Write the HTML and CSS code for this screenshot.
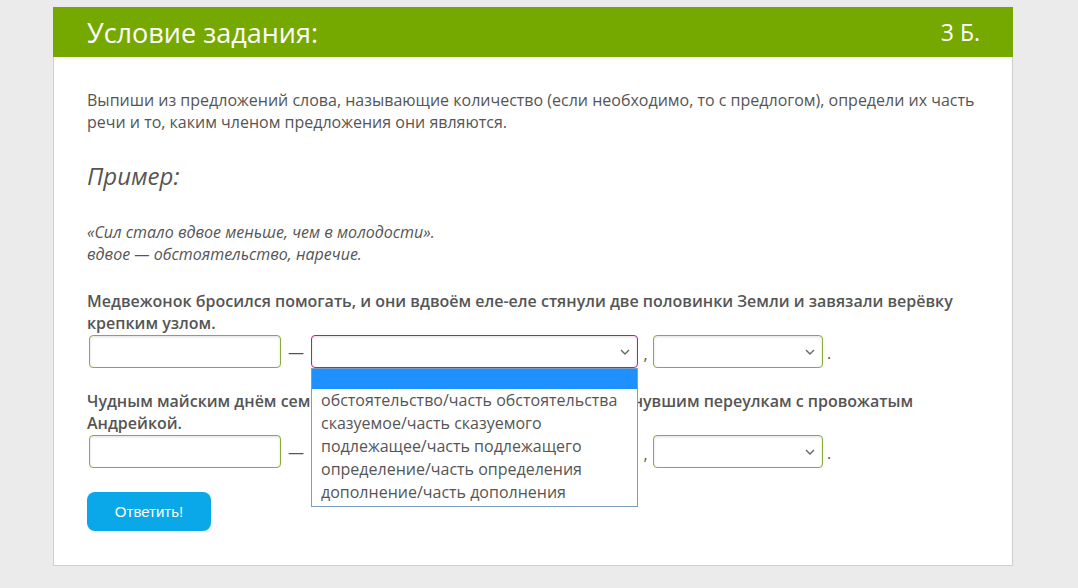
FILE: index.html
```html
<!doctype html>
<html lang="ru">
  <head>
    <meta charset="utf-8">
    <title>Условие задания</title>
    <link rel="stylesheet" href="styles.css">
  </head>
  <body>
    <div class="card">
      <div class="card-head">
        <span class="title">Условие задания:</span>
        <span class="points">3 Б.</span>
      </div>

      <div class="card-body">
        <p class="task">Выпиши из предложений слова, называющие количество (если необходимо, то с предлогом), определи их часть речи и то, каким членом предложения они являются.</p>

        <h2 class="example-title">Пример:</h2>
        <p class="example">«Сил стало вдвое меньше, чем в молодости».<br>вдвое — обстоятельство, наречие.</p>

        <p class="sentence">Медвежонок бросился помогать, и они вдвоём еле-еле стянули две половинки Земли и завязали верёвку крепким узлом.</p>
        <div class="answer-row">
          <div class="field"></div>
          <span class="sep dash">—</span>
          <div class="select wide focused">
            <svg class="chev" width="10" height="6" viewBox="0 0 10 6"><path d="M1 1l4 4 4-4" fill="none" stroke="#666" stroke-width="1.4"/></svg>
            <div class="dropdown">
              <div class="opt selected"></div>
              <div class="opt">обстоятельство/часть обстоятельства</div>
              <div class="opt">сказуемое/часть сказуемого</div>
              <div class="opt">подлежащее/часть подлежащего</div>
              <div class="opt">определение/часть определения</div>
              <div class="opt">дополнение/часть дополнения</div>
            </div>
          </div>
          <span class="sep comma">,</span>
          <div class="select narrow">
            <svg class="chev" width="10" height="6" viewBox="0 0 10 6"><path d="M1 1l4 4 4-4" fill="none" stroke="#666" stroke-width="1.4"/></svg>
          </div>
          <span class="sep dot">.</span>
        </div>

        <p class="sentence second">Чудным майским днём семеро ребят весело гуляли по тихим, затонувшим переулкам с провожатым Андрейкой.</p>
        <div class="answer-row">
          <div class="field"></div>
          <span class="sep dash">—</span>
          <div class="select wide">
            <svg class="chev" width="10" height="6" viewBox="0 0 10 6"><path d="M1 1l4 4 4-4" fill="none" stroke="#666" stroke-width="1.4"/></svg>
          </div>
          <span class="sep comma">,</span>
          <div class="select narrow">
            <svg class="chev" width="10" height="6" viewBox="0 0 10 6"><path d="M1 1l4 4 4-4" fill="none" stroke="#666" stroke-width="1.4"/></svg>
          </div>
          <span class="sep dot">.</span>
        </div>

        <button class="answer-btn" type="button">Ответить!</button>
      </div>
    </div>
  </body>
</html>
```

FILE: styles.css
```css
body {
  margin: 0;
  background: #ebebeb;
  font-family: "Open Sans", "Noto Sans", sans-serif;
  color: #555;
}

.card {
  box-sizing: border-box;
  width: 960px;
  height: 559px;
  margin: 7px 0 0 53px;
  background: #fff;
  border: 1px solid #cfcfcf;
  border-top: 0;
}

.card-head {
  display: flex;
  justify-content: space-between;
  align-items: center;
  height: 50px;
  margin: 0 -1px;
  padding: 0 33px 0 34px;
  background: #76a900;
  color: #fff;
}
.card-head .title { font-size: 27px; }
.card-head .points { font-size: 23px; }

.card-body {
  padding: 32px 34px 0 33px;
}

.task {
  margin: 0;
  font-size: 16px;
  line-height: 22px;
}

.example-title {
  margin: 27px 0 0;
  font-size: 24px;
  line-height: 32px;
  font-weight: normal;
  font-style: italic;
}

.example {
  margin: 29px 0 0;
  font-size: 16px;
  line-height: 22px;
  font-style: italic;
}

.sentence {
  margin: 25px 0 0;
  font-size: 16px;
  line-height: 22px;
  font-weight: 600;
}
.sentence.second { margin-top: 22px; }

.answer-row {
  display: flex;
  align-items: center;
  margin: 1px 0 0 2px;
  height: 33px;
}

.field, .select {
  box-sizing: border-box;
  height: 33px;
  border: 1px solid #8bab37;
  border-radius: 4px;
  box-shadow: inset 0 1px 3px rgba(0, 0, 0, .12);
  background: #fff;
}
.field { width: 192px; }

.select { position: relative; }
.select.wide { width: 327px; }
.select.narrow { width: 170px; }
.select.focused { border-color: #c4168a; }

.chev {
  position: absolute;
  right: 7px;
  top: 13px;
}

.sep { text-align: center; font-size: 16px; }
.sep.dash { width: 30px; }
.sep.comma { width: 15px; padding-top: 4px; }
.sep.dot { width: 12px; padding-top: 2px; }

.dropdown {
  position: absolute;
  left: -1px;
  top: 32px;
  z-index: 2;
  box-sizing: border-box;
  width: 327px;
  height: 139px;
  background: #fff;
  border: 1px solid #7c9dc6;
}
.opt {
  height: 23px;
  padding-left: 9px;
  font-size: 16px;
  line-height: 23px;
  color: #555;
  white-space: nowrap;
}
.opt.selected {
  height: 20px;
  background: #1e90ff;
}

.answer-btn {
  display: block;
  margin-top: 24px;
  width: 124px;
  height: 39px;
  border: 0;
  border-radius: 8px;
  background: #0aa8e8;
  color: #fff;
  font-family: "Liberation Sans", Arial, sans-serif;
  font-size: 15px;
}
```
